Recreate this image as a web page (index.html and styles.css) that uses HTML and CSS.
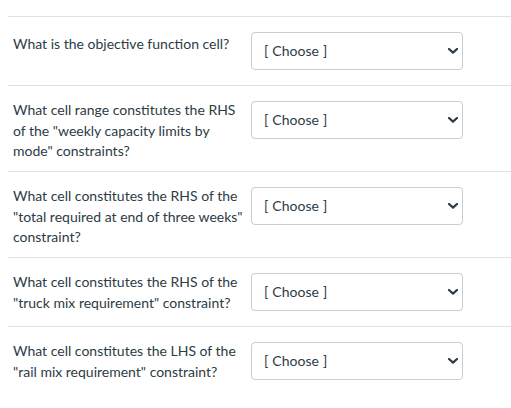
FILE: index.html
```html
<!DOCTYPE html>
<html>
<head>
<meta charset="utf-8">
<link rel="stylesheet" href="styles.css">
</head>
<body>
<div class="answers">
  <div class="answer first">
    <div class="question">What is the objective function cell?</div>
    <div class="select"><span class="choose">[ Choose ]</span><svg class="chev" width="10" height="6" viewBox="0 0 10 6"><path d="M1 1 L5 4.6 L9 1" fill="none" stroke="#2d3b45" stroke-width="2.2" stroke-linecap="round" stroke-linejoin="round"/></svg></div>
  </div>
  <div class="answer">
    <div class="question">What cell range constitutes the RHS of the "weekly capacity limits by mode" constraints?</div>
    <div class="select"><span class="choose">[ Choose ]</span><svg class="chev" width="10" height="6" viewBox="0 0 10 6"><path d="M1 1 L5 4.6 L9 1" fill="none" stroke="#2d3b45" stroke-width="2.2" stroke-linecap="round" stroke-linejoin="round"/></svg></div>
  </div>
  <div class="answer">
    <div class="question">What cell constitutes the RHS of the "total required at end of three weeks" constraint?</div>
    <div class="select"><span class="choose">[ Choose ]</span><svg class="chev" width="10" height="6" viewBox="0 0 10 6"><path d="M1 1 L5 4.6 L9 1" fill="none" stroke="#2d3b45" stroke-width="2.2" stroke-linecap="round" stroke-linejoin="round"/></svg></div>
  </div>
  <div class="answer">
    <div class="question">What cell constitutes the RHS of the "truck mix requirement" constraint?</div>
    <div class="select"><span class="choose">[ Choose ]</span><svg class="chev" width="10" height="6" viewBox="0 0 10 6"><path d="M1 1 L5 4.6 L9 1" fill="none" stroke="#2d3b45" stroke-width="2.2" stroke-linecap="round" stroke-linejoin="round"/></svg></div>
  </div>
  <div class="answer">
    <div class="question">What cell constitutes the LHS of the "rail mix requirement" constraint?</div>
    <div class="select"><span class="choose">[ Choose ]</span><svg class="chev" width="10" height="6" viewBox="0 0 10 6"><path d="M1 1 L5 4.6 L9 1" fill="none" stroke="#2d3b45" stroke-width="2.2" stroke-linecap="round" stroke-linejoin="round"/></svg></div>
  </div>
</div>
</body>
</html>
```
FILE: styles.css
```css
html, body {
  margin: 0;
  padding: 0;
  background: #ffffff;
}
body {
  font-family: Lato, "Liberation Sans", sans-serif;
  color: #2d3b45;
  overflow: hidden;
}
.answers {
  margin: 16px 0 0 8px;
}
.answer {
  display: flex;
  align-items: flex-start;
  border-top: 1px solid #dfe2e4;
  padding: 14px 0 9.5px 0;
}
.question {
  width: 231px;
  padding-left: 5px;
  font-size: 14px;
  line-height: 20.5px;
  flex: none;
}
.first .question {
  padding-top: 2.5px;
}
.select {
  margin: 1px 0 5.5px 7px;
  width: 194px;
  height: 34px;
  border: 1px solid #c7cdd1;
  border-radius: 4px;
  display: flex;
  align-items: center;
  justify-content: space-between;
  padding: 0 4px 2px 12px;
  box-sizing: content-box;
  flex: none;
}
.choose {
  font-size: 14px;
  color: #2d3b45;
  word-spacing: 0.5px;
}
.chev {
  display: block;
  margin-top: 1px;
}
```
